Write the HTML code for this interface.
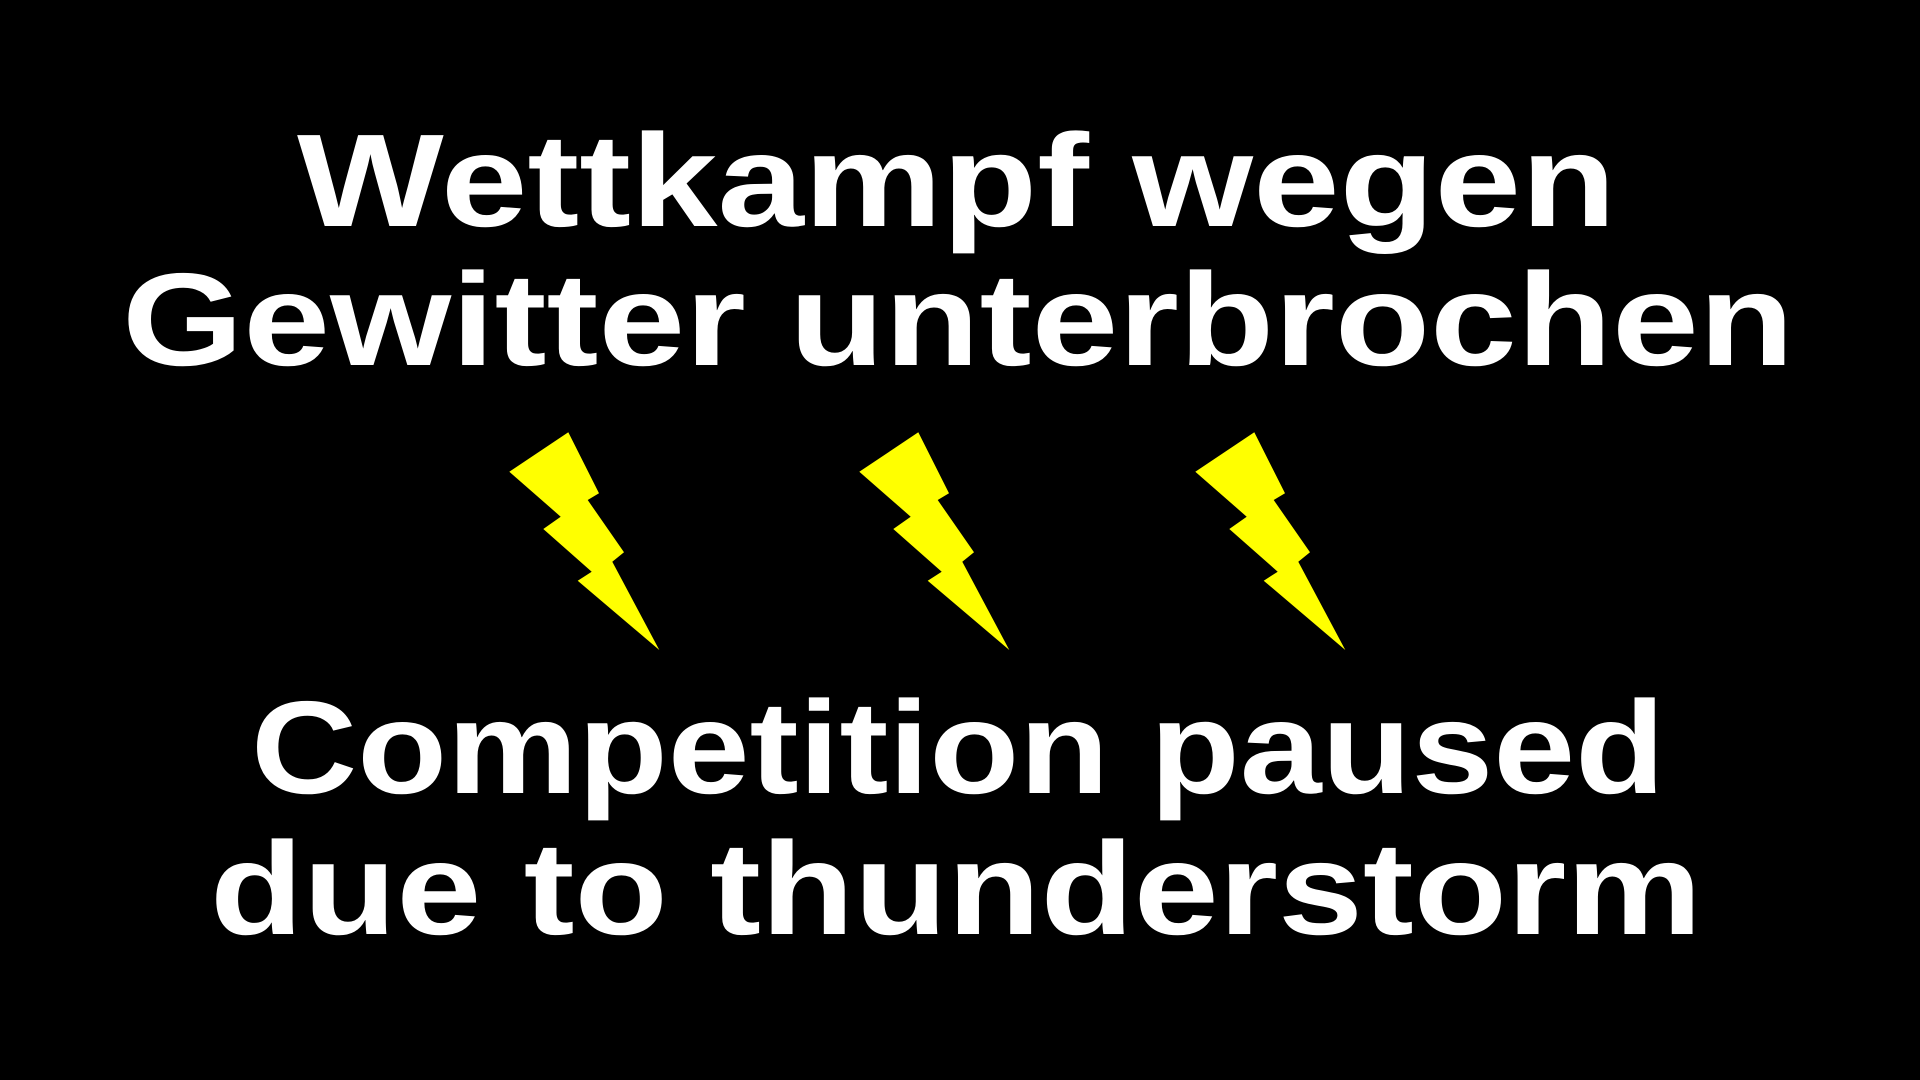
<!DOCTYPE html>
<html><head><meta charset="utf-8"><style>
html,body{margin:0;padding:0;background:#000;width:1920px;height:1080px;overflow:hidden}
svg{display:block}
text{font-family:"Liberation Sans",sans-serif;font-weight:bold;fill:#fff;font-size:132px}
</style></head><body>
<svg width="1920" height="1080" viewBox="0 0 1920 1080">
<rect width="1920" height="1080" fill="#000"/>
<text x="297" y="226" textLength="1319" lengthAdjust="spacingAndGlyphs">Wettkampf wegen</text>
<text x="122" y="365" textLength="1672" lengthAdjust="spacingAndGlyphs">Gewitter unterbrochen</text>
<text x="251" y="793" textLength="1414" lengthAdjust="spacingAndGlyphs">Competition paused</text>
<text x="210" y="934" textLength="1492" lengthAdjust="spacingAndGlyphs">due to thunderstorm</text>
<defs>
<polygon id="b" fill="#ffff00" points="509.3,471.7 568.3,432.3 599,493.3 587.7,500 624,552.3 612.3,561.7 659.3,650 577.7,580.7 591.7,571.7 543.3,529 560.7,516.7"/>
</defs>
<use href="#b"/>
<use href="#b" x="350"/>
<use href="#b" x="686"/>
</svg>
</body></html>
